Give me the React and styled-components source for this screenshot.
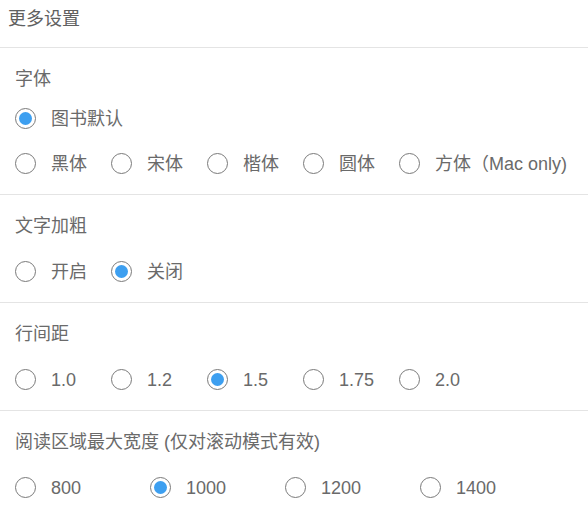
import React from "react";
import styled, { createGlobalStyle } from "styled-components";

const Global = createGlobalStyle`
  html, body { margin: 0; padding: 0; background: #fff; }
  body { font-family: "Liberation Sans", "Noto Sans CJK SC", sans-serif; }
`;

const Panel = styled.div`
  width: 588px;
  background: #fff;
  color: #666;
`;

const Header = styled.div`
  height: 48px;
  box-sizing: border-box;
  padding: 7px 8px 0;
  font-size: 18px;
  line-height: 24px;
  color: #606060;
  border-bottom: 1px solid #e4e4e4;
`;

const Section = styled.section`
  padding: 19px 15px 8px;
  border-bottom: ${(p) => (p.$last ? "none" : "1px solid #e4e4e4")};
`;

const SectionTitle = styled.div`
  font-size: 18px;
  line-height: 24px;
  color: #6a6a6a;
  margin-bottom: ${(p) => p.$gap}px;
`;

const Row = styled.div`
  display: flex;
  align-items: center;
  height: 45px;
`;

const Option = styled.label`
  display: flex;
  align-items: center;
  gap: 15px;
  flex: none;
  width: ${(p) => (p.$w ? `${p.$w}px` : "auto")};
  font-size: 18px;
  line-height: 24px;
  color: #6a6a6a;
  cursor: pointer;
`;

const Circle = styled.span`
  width: 21px;
  height: 21px;
  box-sizing: border-box;
  border-radius: 50%;
  border: 1px solid #7a7a7a;
  display: flex;
  align-items: center;
  justify-content: center;
  flex: none;
  &::after {
    content: "";
    width: 13px;
    height: 13px;
    border-radius: 50%;
    background: #3d9ff0;
    display: ${(p) => (p.$on ? "block" : "none")};
  }
`;

function Radio({ label, on, w }) {
  return (
    <Option $w={w}>
      <Circle $on={on} />
      <span>{label}</span>
    </Option>
  );
}

function OptionRow({ items, selected, w }) {
  return (
    <Row>
      {items.map((it, i) => (
        <Radio key={it} label={it} on={it === selected} w={i === items.length - 1 && w === 96 ? undefined : w} />
      ))}
    </Row>
  );
}

export default function App() {
  return (
    <>
      <Global />
      <Panel>
        <Header>更多设置</Header>
        <Section>
          <SectionTitle $gap={5}>字体</SectionTitle>
          <OptionRow items={["图书默认"]} selected="图书默认" w={96} />
          <OptionRow items={["黑体", "宋体", "楷体", "圆体", "方体（Mac only)"]} w={96} />
        </Section>
        <Section>
          <SectionTitle $gap={11}>文字加粗</SectionTitle>
          <OptionRow items={["开启", "关闭"]} selected="关闭" w={96} />
        </Section>
        <Section>
          <SectionTitle $gap={11}>行间距</SectionTitle>
          <OptionRow items={["1.0", "1.2", "1.5", "1.75", "2.0"]} selected="1.5" w={96} />
        </Section>
        <Section $last>
          <SectionTitle $gap={11}>阅读区域最大宽度 (仅对滚动模式有效)</SectionTitle>
          <OptionRow items={["800", "1000", "1200", "1400"]} selected="1000" w={135} />
        </Section>
      </Panel>
    </>
  );
}
